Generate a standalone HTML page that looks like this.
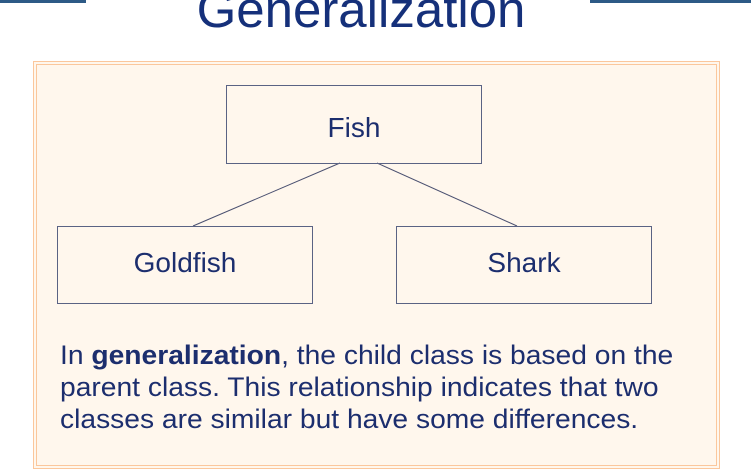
<!DOCTYPE html>
<html><head><style>
body{margin:0;width:751px;height:453px;overflow:hidden;background:#fff;position:relative;font-family:"Liberation Sans",sans-serif;}
.bar{position:absolute;top:0;height:3px;background:#2d5a86;}
.title{position:absolute;left:0;width:722px;text-align:center;top:-20px;font-size:51px;color:#15307a;}
.panel{position:absolute;left:33px;top:61px;width:679px;height:400px;background:#fff7ed;border:4px double #fbc79c;}
.box{position:absolute;border:1px solid #5a6384;box-sizing:border-box;color:#1c2e6e;font-size:28px;text-align:center;}
.txt{position:absolute;left:60px;top:339px;width:700px;font-size:27px;line-height:32px;color:#1c2e6e;white-space:nowrap;transform-origin:0 0;transform:scaleX(1.045);}
</style></head><body>
<div class="bar" style="left:0;width:86px"></div>
<div class="bar" style="left:590px;width:161px"></div>
<div class="title">Generalization</div>
<div class="panel"></div>
<svg style="position:absolute;left:0;top:0" width="751" height="453"><line x1="340" y1="163" x2="193" y2="226" stroke="#4a5070" stroke-width="1"/><line x1="377" y1="163" x2="517" y2="226" stroke="#4a5070" stroke-width="1"/></svg>
<div class="box" style="left:226px;top:85px;width:256px;height:79px;line-height:84px">Fish</div>
<div class="box" style="left:57px;top:226px;width:256px;height:78px;line-height:72px">Goldfish</div>
<div class="box" style="left:396px;top:226px;width:256px;height:78px;line-height:72px">Shark</div>
<div class="txt">In <b>generalization</b>, the child class is based on the<br>parent class. This relationship indicates that two<br>classes are similar but have some differences.</div>
</body></html>
